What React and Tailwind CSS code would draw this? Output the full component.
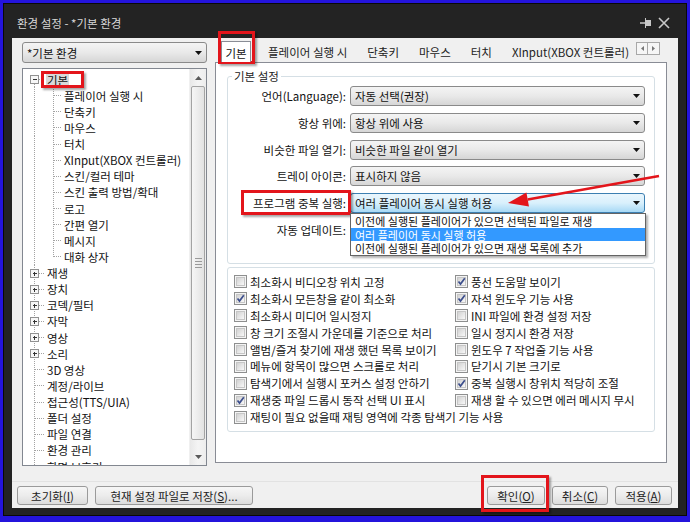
import React from "react";

const DOT = "#a3a3a3";

function Dotted({ x1, y1, x2, y2 }) {
  return (
    <line x1={x1} y1={y1} x2={x2} y2={y2} stroke={DOT} strokeWidth="1" strokeDasharray="1 1" shapeRendering="crispEdges" />
  );
}

function ExpBox({ plus }) {
  return (
    <g shapeRendering="crispEdges">
      <rect x="7.5" y="4.5" width="8" height="8" fill="#f7f7f7" stroke="#919191" />
      <line x1="9.5" y1="8.5" x2="14" y2="8.5" stroke="#333" />
      {plus && <line x1="11.5" y1="6.5" x2="11.5" y2="11" stroke="#333" />}
    </g>
  );
}

function TreeRow({ kind, label, box, plus, first, lastChild, selected }) {
  const isChild = kind === "child";
  return (
    <div className="flex items-center h-[16.13px] whitespace-nowrap overflow-visible">
      <svg width={isChild ? 40 : 23} height="17" className="shrink-0 overflow-visible" style={{ marginTop: "-1px" }}>
        <Dotted x1="11.5" y1={first ? 8.5 : 0} x2="11.5" y2="17" />
        {isChild ? (
          <>
            <Dotted x1="30.5" y1="0" x2="30.5" y2={lastChild ? 8.5 : 17} />
            <Dotted x1="30.5" y1="8.5" x2="38" y2="8.5" />
          </>
        ) : (
          <>
            <Dotted x1="11.5" y1="8.5" x2="21" y2="8.5" />
            {box && <ExpBox plus={plus} />}
          </>
        )}
      </svg>
      <span className={"leading-[15px] px-[1px] " + (selected ? "bg-[#d9d9d9]" : "")}>{label}</span>
    </div>
  );
}

function Check({ checked }) {
  return (
    <span className="relative inline-flex w-[13px] h-[13px] shrink-0 items-center justify-center border border-[#8e8f8f] bg-[#f4f4f4]">
      <span className="w-[9px] h-[9px] border border-[#c6c6c6] bg-gradient-to-br from-[#d2d2d2] to-[#f8f8f8]" />
      {checked && (
        <svg width="11" height="11" className="absolute left-[0px] top-[0px]">
          <path d="M2.5 5.5 L4.5 8 L8.8 2.2" stroke="#3c4e8c" strokeWidth="1.7" fill="none" />
        </svg>
      )}
    </span>
  );
}

function DownTri() {
  return (
    <svg width="7" height="4" className="shrink-0">
      <polygon points="0,0 7,0 3.5,4" fill="#111" />
    </svg>
  );
}

function Select({ text, active }) {
  return (
    <div
      className={
        "w-[295px] h-[20px] rounded-[3px] border flex items-center justify-between pl-[4px] pr-[4px] " +
        (active
          ? "border-[#3c7fb1] bg-gradient-to-b from-[#eaf6fd] via-[#d9f0fc] to-[#a7d9f5]"
          : "border-[#8a8a8a] bg-gradient-to-b from-[#f4f4f4] via-[#e9e9e9] to-[#d6d6d6]")
      }
    >
      <span className="leading-[14px] whitespace-nowrap">{text}</span>
      <DownTri />
    </div>
  );
}

function FormRow({ label, text, active }) {
  return (
    <div className="flex items-center h-[20px]">
      <div className="w-[118px] text-right leading-[14px] whitespace-nowrap">{label}</div>
      <div className="ml-[4px]">
        <Select text={text} active={active} />
      </div>
    </div>
  );
}

function Btn({ w, children, className = "" }) {
  return (
    <div
      className={
        "h-[19px] rounded-[3px] border border-[#9a9a9a] bg-gradient-to-b from-[#f6f6f6] via-[#ececec] to-[#dcdcdc] flex items-center justify-center leading-[14px] text-[#222] " +
        className
      }
      style={{ width: w }}
    >
      {children}
    </div>
  );
}

const RedBox = ({ className }) => (
  <div className={"absolute border-[3px] border-[#e3151b] shadow-[2px_2px_2px_rgba(0,0,0,0.35)] pointer-events-none " + className} />
);

export default function App() {
  const children = [
    "플레이어 실행 시",
    "단축키",
    "마우스",
    "터치",
    "XInput(XBOX 컨트롤러)",
    "스킨/컬러 테마",
    "스킨 출력 방법/확대",
    "로고",
    "간편 열기",
    "메시지",
    "대화 상자",
  ];
  const plusRoots = ["재생", "장치", "코덱/필터", "자막", "영상", "소리"];
  const leafRoots = ["3D 영상", "계정/라이브", "접근성(TTS/UIA)", "폴더 설정", "파일 연결", "환경 관리", "화면 보호기"];

  const leftChecks = [
    ["최소화시 비디오창 위치 고정", false],
    ["최소화시 모든창을 같이 최소화", true],
    ["최소화시 미디어 일시정지", false],
    ["창 크기 조절시 가운데를 기준으로 처리", false],
    ["앨범/즐겨 찾기에 재생 했던 목록 보이기", false],
    ["메뉴에 항목이 많으면 스크롤로 처리", false],
    ["탐색기에서 실행시 포커스 설정 안하기", false],
    ["재생중 파일 드롭시 동작 선택 UI 표시", true],
  ];
  const rightChecks = [
    ["풍선 도움말 보이기", true],
    ["자석 윈도우 기능 사용", true],
    ["INI 파일에 환경 설정 저장", false],
    ["일시 정지시 환경 저장", false],
    ["윈도우 7 작업줄 기능 사용", false],
    ["닫기시 기본 크기로", false],
    ["중복 실행시 창위치 적당히 조절", true],
    ["재생 할 수 있으면 에러 메시지 무시", false],
  ];

  const tabCls = "h-[21px] px-[10px] flex items-center leading-[14px] whitespace-nowrap shrink-0 text-[#222]";

  return (
    <div className="relative w-[690px] h-[522px] overflow-hidden bg-[#2414dc] pt-[3px] px-[3px] pb-[6px] font-['Noto_Sans_CJK_KR','Noto_Sans',sans-serif] text-[11.5px] text-[#111]">
      <div className="h-full border border-[#090909] bg-[#232323] flex flex-col">
        {/* title bar */}
        <div className="h-[34px] shrink-0 flex items-start justify-between pl-[13px] pr-[16px] pt-[12px]">
          <span className="text-[#d8d8d8] leading-[14px] text-[11.5px]">환경 설정 - *기본 환경</span>
          <div className="flex items-center gap-[6px] pt-[1px]">
            <svg width="12" height="10">
              <line x1="0" y1="5" x2="5" y2="5" stroke="#c8c8c8" strokeWidth="1.5" />
              <rect x="5" y="2" width="6" height="6" fill="#c8c8c8" />
              <line x1="5.5" y1="0" x2="5.5" y2="10" stroke="#c8c8c8" strokeWidth="1" />
            </svg>
            <svg width="12" height="12">
              <path d="M1 1 L11 11 M11 1 L1 11" stroke="#c8c8c8" strokeWidth="1.6" />
            </svg>
          </div>
        </div>

        {/* light panel */}
        <div className="flex-1 mx-[8px] mb-[7px] bg-[#f0f0f0] flex flex-col">
          <div className="h-[428px] flex pl-[10px]">
            {/* left column */}
            <div className="w-[185px] pt-[4px] flex flex-col">
              <div className="h-[21px] rounded-[3px] border border-[#8a8a8a] bg-gradient-to-b from-[#f4f4f4] via-[#e9e9e9] to-[#d6d6d6] flex items-center justify-between pl-[4px] pr-[4px]">
                <span className="leading-[14px]">*기본 환경</span>
                <DownTri />
              </div>
              <div className="mt-[5px] h-[398px] border border-[#828790] bg-white flex">
                <div className="flex-1 overflow-hidden pt-[3px]">
                  <TreeRow kind="root" label="기본" box first selected />
                  {children.map((c, i) => (
                    <TreeRow key={c} kind="child" label={c} lastChild={i === children.length - 1} />
                  ))}
                  {plusRoots.map((c) => (
                    <TreeRow key={c} kind="root" label={c} box plus />
                  ))}
                  {leafRoots.map((c) => (
                    <TreeRow key={c} kind="root" label={c} />
                  ))}
                </div>
                {/* scrollbar */}
                <div className="w-[17px] shrink-0 flex flex-col bg-gradient-to-r from-[#e8e8e8] via-[#f4f4f4] to-[#ededed] border-l border-[#f0f0f0]">
                  <div className="h-[17px] flex items-center justify-center">
                    <svg width="7" height="4"><polygon points="0,4 7,4 3.5,0" fill="#5a5a5a" /></svg>
                  </div>
                  <div className="h-[354px] mx-[1px] rounded-[2px] border border-[#a3a3a3] bg-gradient-to-r from-[#f6f6f6] to-[#e2e2e2] flex flex-col items-center justify-center gap-[2px]">
                    <div className="w-[7px] h-px bg-[#9a9a9a]" />
                    <div className="w-[7px] h-px bg-[#9a9a9a]" />
                    <div className="w-[7px] h-px bg-[#9a9a9a]" />
                    <div className="w-[7px] h-px bg-[#9a9a9a]" />
                  </div>
                  <div className="flex-1" />
                  <div className="h-[17px] flex items-center justify-center">
                    <svg width="7" height="4"><polygon points="0,0 7,0 3.5,4" fill="#5a5a5a" /></svg>
                  </div>
                </div>
              </div>
            </div>

            {/* right column */}
            <div className="w-[452px] ml-[8px] flex flex-col">
              <div className="h-[24px] flex items-end relative">
                <div className="flex items-end flex-1 overflow-hidden">
                  <div className="ml-[6px] w-[30px] h-[22px] -mb-px relative z-10 bg-white border border-b-0 border-[#898c95] flex items-center justify-center leading-[14px] shrink-0">
                    기본
                  </div>
                  <div className={"ml-[7px] " + tabCls}>플레이어 실행 시</div>
                  <div className={tabCls}>단축키</div>
                  <div className={tabCls}>마우스</div>
                  <div className={tabCls}>터치</div>
                  <div className={tabCls}>XInput(XBOX 컨트롤러)</div>
                </div>
                <div className="absolute right-[7px] top-[4px] flex">
                  <div className="w-[12px] h-[13px] border border-[#a8a8a8] bg-[#f6f6f6] flex items-center justify-center">
                    <svg width="3" height="5"><polygon points="3,0 3,5 0,2.5" fill="#777" /></svg>
                  </div>
                  <div className="w-[12px] h-[13px] border border-l-0 border-[#a8a8a8] bg-[#f6f6f6] flex items-center justify-center">
                    <svg width="3" height="5"><polygon points="0,0 0,5 3,2.5" fill="#777" /></svg>
                  </div>
                </div>
              </div>
              <div className="h-[401px] bg-white border border-[#898c95] pl-[11px] pt-[13px]">
                {/* group 1 */}
                <div className="relative w-[428px] h-[188px] border border-[#d5dfe5] rounded-[3px] pt-[9px]">
                  <div className="absolute -top-[8px] left-[4px] bg-white px-[2px] leading-[14px] text-[#222]">기본 설정</div>
                  <div className="flex flex-col gap-[6.75px]">
                    <FormRow label="언어(Language):" text="자동 선택(권장)" />
                    <FormRow label="항상 위에:" text="항상 위에 사용" />
                    <FormRow label="비슷한 파일 열기:" text="비슷한 파일 같이 열기" />
                    <FormRow label="트레이 아이콘:" text="표시하지 않음" />
                    <FormRow label="프로그램 중복 실행:" text="여러 플레이어 동시 실행 허용" active />
                    <FormRow label="자동 업데이트:" text="" />
                  </div>
                  <div className="absolute left-[122px] top-[136px] w-[296px] h-[43px] z-20 bg-white border border-[#646464] shadow-[2px_2px_2px_rgba(0,0,0,0.3)] flex flex-col text-[11px]">
                    <div className="h-[14px] flex items-center pl-[4px] leading-[12px] whitespace-nowrap">이전에 실행된 플레이어가 있으면 선택된 파일로 재생</div>
                    <div className="h-[13px] flex items-center pl-[4px] leading-[12px] whitespace-nowrap bg-[#3399ff] text-white">여러 플레이어 동시 실행 허용</div>
                    <div className="h-[14px] flex items-center pl-[4px] leading-[12px] whitespace-nowrap">이전에 실행된 플레이어가 있으면 재생 목록에 추가</div>
                  </div>
                </div>
                {/* group 2 */}
                <div className="mt-[3px] w-[428px] h-[165px] border border-[#d5dfe5] rounded-[3px] pl-[6px] pt-[5.5px]">
                  <div className="grid grid-cols-[221px_1fr]">
                    {leftChecks.map(([t, c], i) => (
                      <React.Fragment key={t}>
                        <div className="h-[16.9px] flex items-center gap-[3px] whitespace-nowrap">
                          <Check checked={c} />
                          <span className="leading-[14px]">{t}</span>
                        </div>
                        <div className="h-[16.9px] flex items-center gap-[3px] whitespace-nowrap">
                          <Check checked={rightChecks[i][1]} />
                          <span className="leading-[14px]">{rightChecks[i][0]}</span>
                        </div>
                      </React.Fragment>
                    ))}
                    <div className="col-span-2 h-[16.9px] flex items-center gap-[3px] whitespace-nowrap">
                      <Check checked={false} />
                      <span className="leading-[14px]">재팅이 필요 없을때 재팅 영역에 각종 탐색기 기능 사용</span>
                    </div>
                  </div>
                </div>
              </div>
            </div>
          </div>

          <div className="mt-[15px] h-px bg-[#e2e2e2]" />
          {/* buttons */}
          <div className="mt-[4px] flex pl-[5px] pr-[6px]">
            <Btn w={71}>초기화(<u>I</u>)</Btn>
            <Btn w={158} className="ml-[7px]">현재 설정 파일로 저장(<u>S</u>)...</Btn>
            <div className="flex-1" />
            <Btn w={58}>확인(<u>O</u>)</Btn>
            <Btn w={56} className="ml-[7px]">취소(<u>C</u>)</Btn>
            <Btn w={57} className="ml-[7px]">적용(<u>A</u>)</Btn>
          </div>
        </div>
      </div>

      {/* annotations */}
      <RedBox className="left-[218px] top-[31px] w-[37px] h-[33px]" />
      <RedBox className="left-[41px] top-[71px] w-[43px] h-[17px]" />
      <RedBox className="left-[241px] top-[190px] w-[110px] h-[25px]" />
      <RedBox className="left-[481px] top-[475px] w-[68px] h-[37px]" />
      <svg className="absolute left-0 top-0 pointer-events-none" width="690" height="522">
        <line x1="659" y1="176" x2="527.7" y2="199.5" stroke="#e3151b" strokeWidth="2.6" />
        <polygon points="508,203 526.4,192.4 529.0,206.6" fill="#e3151b" />
      </svg>
    </div>
  );
}
